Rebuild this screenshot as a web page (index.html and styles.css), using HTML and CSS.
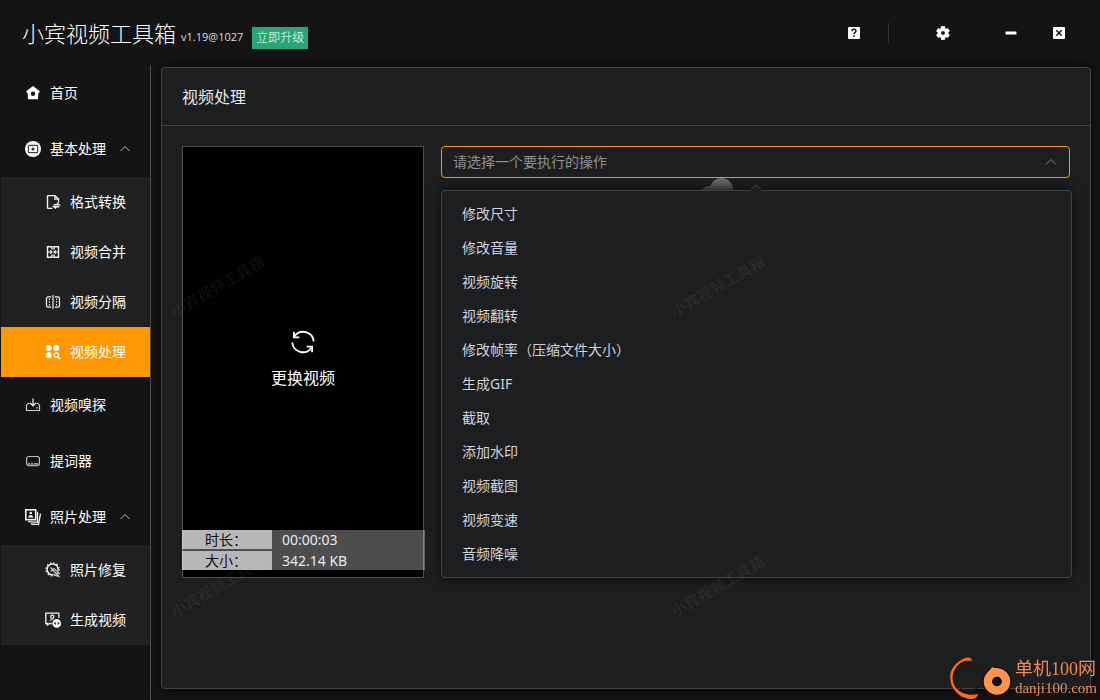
FILE: index.html
```html
<!DOCTYPE html>
<html lang="zh-CN">
<head>
<meta charset="utf-8">
<meta name="viewport" content="width=device-width, initial-scale=1">
<title>小宾视频工具箱</title>
<link rel="stylesheet" href="styles.css">
</head>
<body>
<header class="topbar">
  <h1 class="brand">小宾视频工具箱</h1>
  <span class="version">v1.19@1027</span>
  <button class="upgrade" type="button">立即升级</button>
  <div class="tools">
    <button class="tool" type="button" aria-label="帮助">
      <svg viewBox="0 0 16 16" width="16" height="16"><rect x="2" y="2" width="12" height="12" rx="1" fill="#fff"/><path d="M6 6.200C6 4.900 6.900 4.300 8 4.300S10 5 10 6.100C10 7.400 8 7.500 8 9.200" fill="none" stroke="#141414" stroke-width="1.400"/><rect x="7.200" y="10.200" width="1.600" height="1.600" fill="#141414"/></svg>
    </button>
    <span class="divider"></span>
    <button class="tool tool-settings" type="button" aria-label="设置">
      <svg viewBox="1.500 1.500 21 21" width="14" height="14"><path fill="#fff" stroke="#fff" stroke-linejoin="round" d="M19.400 13a7.500 7.500 0 0 0 0-2l2.300-1.700-2.400-4.100-2.700 1.100a7.500 7.500 0 0 0-1.700-1L14.400 2H9.600l-.5 3.300a7.500 7.500 0 0 0-1.700 1L4.700 5.200 2.300 9.300 4.600 11a7.500 7.500 0 0 0 0 2l-2.300 1.700 2.400 4.100 2.700-1.100a7.500 7.500 0 0 0 1.700 1l.5 3.300h4.800l.5-3.300a7.500 7.500 0 0 0 1.700-1l2.700 1.100 2.400-4.100zM12 15.400a3.400 3.400 0 1 1 0-6.800 3.400 3.400 0 0 1 0 6.800z"/></svg>
    </button>
    <button class="tool" type="button" aria-label="最小化">
      <svg viewBox="0 0 16 16" width="16" height="16"><rect x="2.500" y="6.500" width="11" height="3" rx=".5" fill="#fff"/></svg>
    </button>
    <button class="tool" type="button" aria-label="关闭">
      <svg viewBox="0 0 16 16" width="16" height="16"><rect x="2" y="2" width="12" height="12" rx="1" fill="#fff"/><path d="M5.300 5.300l5.400 5.400M10.700 5.300l-5.400 5.400" stroke="#141414" stroke-width="1.500"/></svg>
    </button>
  </div>
</header>

<div class="shell">
  <nav class="sidebar">
    <a class="item" href="#home">
      <svg class="icon" viewBox="0 0 16 16"><path fill="#fff" fill-rule="evenodd" d="M8 1L14.800 6.200 14 8.100H13.400L13 14.300H3L2.600 8.100H2L1.200 6.200zM8 6.600A2.200 2.200 0 1 0 8 11 2.200 2.200 0 0 0 8 6.600z"/></svg>
      首页
    </a>
    <a class="item" href="#basic" aria-expanded="true">
      <svg class="icon" viewBox="0 0 16 16"><circle cx="8" cy="8" r="8" fill="#fff"/><rect x="3.400" y="4.400" width="9.200" height="7.200" rx=".6" fill="none" stroke="#444" stroke-width="1.200"/><circle cx="8" cy="8" r="1.600" fill="#333"/></svg>
      基本处理
      <svg class="caret" viewBox="0 0 12 12"><path d="M1.500 8L6 3.500 10.500 8"/></svg>
    </a>
    <div class="group">
      <a class="item sub" href="#convert">
        <svg class="icon line" viewBox="0 0 16 16"><path d="M7.500 14.400H3.200Q2.500 14.400 2.500 13.700V2.300Q2.500 1.600 3.200 1.600H10l3.500 3.500v3.400M9.900 1.800v3.300h3.400" stroke-width="1.400"/><path d="M8.500 10.800H14L12 9M14.300 12.700H9l2 1.800" stroke-width="1.600"/></svg>
        格式转换
      </a>
      <a class="item sub" href="#merge">
        <svg class="icon line" viewBox="0 0 16 16"><path d="M7 5.500V2.800H2.500v10.400H7v-2.700M9 5.500V2.800h4.500v10.400H9v-2.700" stroke-width="1.400"/><path d="M3 8h3.500M13 8H9.500M5.300 6.300L7 8 5.300 9.700M10.700 6.300L9 8l1.700 1.700"/></svg>
        视频合并
      </a>
      <a class="item sub" href="#split">
        <svg class="icon line" viewBox="0 0 16 16"><path d="M6.200 2.900H3.200Q1.500 2.900 1.500 4.600v6.800Q1.500 13.100 3.200 13.100h3M9.800 2.900h3q1.700 0 1.700 1.700v6.800q0 1.700-1.700 1.700h-3"/><path d="M4.400 4.400v1.600M4.400 7.200v1.600M4.400 10v1.600M11.600 4.400v1.600M11.600 7.200v1.600M11.600 10v1.600" stroke-width="1"/><path d="M8 1v14" stroke="#999" stroke-width="2"/></svg>
        视频分隔
      </a>
      <a class="item sub active" href="#process" aria-current="page">
        <svg class="icon" viewBox="0 0 16 16"><g fill="#fff"><circle cx="3.800" cy="4" r="2.900"/><circle cx="11.200" cy="4" r="2.900"/><circle cx="3.800" cy="11.200" r="2.900"/></g><circle cx="11.300" cy="11" r="2.200" fill="none" stroke="#fff" stroke-width="1.300"/><path d="M12.800 12.700l2.200 2.300" stroke="#fff" stroke-width="1.400"/></svg>
        视频处理
      </a>
    </div>
    <a class="item" href="#sniff">
      <svg class="icon line" viewBox="0 0 16 16"><path d="M8 1.500V8.500M5.200 6L8 8.800 10.800 6"/><path d="M4.500 6.500H3L1.500 8.500V13.500h13V8.500L13 6.500h-1.500M11.300 10.800h1.500" stroke="#ccc"/></svg>
      视频嗅探
    </a>
    <a class="item" href="#prompter">
      <svg class="icon line" viewBox="0 0 16 16"><rect x="1.600" y="3.500" width="12.800" height="9.200" rx="2.200" stroke="#bbb"/><path d="M3 10.600h2M6 10.600h2M9 10.600h4M2.500 12h11" stroke="#999"/></svg>
      提词器
    </a>
    <a class="item" href="#photo" aria-expanded="true">
      <svg class="icon line" viewBox="0 0 16 16"><rect x=".8" y=".8" width="9.900" height="9.900" stroke-width="1.600"/><circle cx="5.700" cy="4" r="1.300" fill="#fff" stroke="none"/><path d="M3 8.500Q3.500 6 5.700 6T8.400 8.500z" fill="#fff" stroke="none"/><path d="M3.200 12.600l9.300.8V2.800M6 15l7.500.6 2-11" stroke-width="1.300"/></svg>
      照片处理
      <svg class="caret" viewBox="0 0 12 12"><path d="M1.500 8L6 3.500 10.500 8"/></svg>
    </a>
    <div class="group">
      <a class="item sub" href="#restore">
        <svg class="icon line" viewBox="0 0 16 16"><path d="M13 8.500A5.500 5.500 0 1 0 8 12.900" stroke-width="1.500"/><circle cx="7.500" cy="7.300" r="6.500" stroke-dasharray="1.500 1.900" stroke-width="1.400"/><path d="M5.500 5.500l9 9.500M6 9.500l3-3 6 5.500M8 12l5 2.500" stroke="#ccc" stroke-width="1.200"/></svg>
        照片修复
      </a>
      <a class="item sub" href="#generate">
        <svg class="icon line" viewBox="0 0 16 16"><path d="M6.800 11.500H4.500L2.500 13V11.500H.8V1.200h13V6" stroke-width="1.300"/><circle cx="7.300" cy="4.800" r="1.600"/><path d="M4.600 8.800Q5.500 7.500 7.500 7.600" stroke-width="1"/><circle cx="11.700" cy="11.400" r="4.300" fill="#fff" stroke="none"/><path d="M8.800 11.400L10.700 9.800V13zM14.600 11.400L12.700 9.800V13z" fill="#222" stroke="none"/></svg>
        生成视频
      </a>
    </div>
  </nav>

  <main class="main">
    <section class="panel">
      <h2 class="panel-title">视频处理</h2>
      <div class="panel-body">
        <div class="preview">
          <button class="replace" type="button">
            <svg viewBox="0 0 24 24" width="24" height="24" fill="none" stroke="#fff" stroke-width="1.800"><path d="M3.500 6.300A10.600 10.600 0 0 1 22.700 11.500M20.500 17.700A10.600 10.600 0 0 1 1.300 12.500"/><path d="M2.900 1.700V7.300H8.300M21.100 22.300V16.700H15.700"/></svg>
            更换视频
          </button>
          <dl class="meta">
            <dt>时长：</dt><dd>00:00:03</dd>
            <dt>大小：</dt><dd>342.14 KB</dd>
          </dl>
        </div>
        <div class="operation">
          <div class="picker">
            <select class="select" aria-label="操作">
              <option>请选择一个要执行的操作</option>
              <option>修改尺寸</option>
              <option>修改音量</option>
              <option>视频旋转</option>
              <option>视频翻转</option>
            </select>
            <svg class="caret picker-caret" viewBox="0 0 12 12"><path d="M1 8.500L6 3.500 11 8.500"/></svg>
          </div>
          <svg class="cloud" viewBox="0 0 34 12" aria-hidden="true"><defs><linearGradient id="haze" x1="0" y1="0" x2="0" y2="1"><stop offset="0" stop-color="#707173"/><stop offset="1" stop-color="#48494b"/></linearGradient></defs><path d="M1 12C3 9 6 7.600 9.500 8.200 11 3 15.500 0 20.500 0 27 0 32 5 32.500 12z" fill="url(#haze)"/></svg>
          <div class="menu">
            <svg class="menu-arrow" viewBox="0 0 12 7" aria-hidden="true"><path d="M0 6.500L6 .8l6 5.700V7H0z" fill="#1d1e1f"/><path d="M.5 6L6 .8 11.500 6" fill="none" stroke="#414243"/></svg>
            <ul class="options" role="listbox" aria-label="操作列表">
              <li role="option">修改尺寸</li>
              <li role="option">修改音量</li>
              <li role="option">视频旋转</li>
              <li role="option">视频翻转</li>
              <li role="option">修改帧率（压缩文件大小）</li>
              <li role="option">生成GIF</li>
              <li role="option">截取</li>
              <li role="option">添加水印</li>
              <li role="option">视频截图</li>
              <li role="option">视频变速</li>
              <li role="option">音频降噪</li>
            </ul>
          </div>
        </div>
      </div>
      <div class="marks" aria-hidden="true">
        <span>小宾视频工具箱</span><span>小宾视频工具箱</span>
        <span>小宾视频工具箱</span><span>小宾视频工具箱</span>
      </div>
    </section>
  </main>
</div>

<div class="site">
  <svg class="site-logo" viewBox="0 0 64 44" aria-hidden="true">
    <circle cx="18.500" cy="21.500" r="13.500" fill="none" stroke="#221a18" stroke-width="1.500"/>
    <path d="M18.500 17v9M14 21.500h9" stroke="#251b19" stroke-width="2"/>
    <path d="M22 5C21.500 1 17.500 1 14 2.500 6 6-.2 13 .2 22 .6 33 9 41.500 19 43 24 43.600 27.500 41.500 28 38 17 40.500 3.500 36 2.600 23 2.200 14 8.500 6.500 15 5 18 4.500 20 4.500 22 5z" fill="#ff6a0c"/>
    <circle cx="47" cy="25.500" r="14.500" fill="#111"/>
    <circle cx="47" cy="25.500" r="9" fill="none" stroke="#ff924f" stroke-width="8.500"/>
    <circle cx="47" cy="25.500" r="4.700" fill="#111"/>
    <path d="M38 16.500l4-5.300 7 1.500z" fill="#ff924f"/>
  </svg>
  <div class="site-text">
    <span class="site-name">单机100网</span>
    <span class="site-url">danji100.com</span>
  </div>
</div>
</body>
</html>
```

FILE: styles.css
```css
* {
  box-sizing: border-box;
}

body {
  margin: 0;
  min-height: 100vh;
  display: flex;
  flex-direction: column;
  background: #141414;
  color: #fff;
  font: 14px/20px "Noto Sans", "Noto Sans CJK SC", sans-serif;
}

button {
  padding: 0;
  border: 0;
  background: none;
  color: inherit;
  font: inherit;
  cursor: pointer;
}

.topbar {
  display: flex;
  align-items: center;
  height: 65px;
  padding: 0 29px 0 22px;
}

.brand {
  margin: 0;
  font-size: 22px;
  font-weight: 300;
  line-height: 30px;
  color: #fff;
}

.version {
  margin-left: 5px;
  padding-top: 9px;
  font-family: "Open Sans", sans-serif;
  font-size: 11px;
  color: #ddd;
}

.upgrade {
  margin: 11px 0 0 9px;
  padding: 0 4px;
  height: 22px;
  background: #27a776;
  font-size: 12px;
  font-weight: 300;
  line-height: 22px;
}

.tools {
  display: flex;
  align-items: center;
  margin-left: auto;
  gap: 22px;
}

.tool {
  display: grid;
  place-items: center;
  width: 24px;
  height: 24px;
}

.tool + .tool {
  margin-left: 2px;
}

.tool-settings {
  margin: 0 20px;
}

.divider {
  width: 1px;
  height: 20px;
  background: #333;
}

.shell {
  flex: 1;
  display: flex;
}

.sidebar {
  flex: none;
  width: 151px;
  padding-left: 1px;
  border-right: 1px solid #4c4d4f;
}

.item {
  display: flex;
  align-items: center;
  height: 56px;
  padding-left: 24px;
  color: #fff;
  text-decoration: none;
}

.icon {
  width: 16px;
  height: 16px;
  margin-right: 9px;
}

.line {
  fill: none;
  stroke: #f2f2f2;
  stroke-width: 1.2;
}

.caret {
  width: 12px;
  height: 12px;
  margin-left: 13px;
  fill: none;
  stroke: #bbb;
}

.group {
  background: #212121;
}

.sub {
  height: 50px;
  padding-left: 44px;
}

.active {
  background: #ff9800;
}

.main {
  flex: 1;
  display: flex;
  min-width: 0;
  padding: 2px 9px 11px 10px;
}

.panel {
  position: relative;
  flex: 1;
  min-width: 0;
  overflow: hidden;
  border: 1px solid #414243;
  border-radius: 4px;
  background: #1d1e1f;
  box-shadow: 0 0 12px rgba(0, 0, 0, 0.7);
}

.panel-title {
  margin: 0;
  padding: 18px 20px 17px;
  border-bottom: 1px solid #414243;
  color: #e5eaf3;
  font-size: 16px;
  font-weight: 400;
  line-height: 22px;
}

.panel-body {
  display: flex;
  align-items: flex-start;
  gap: 17px;
  padding: 20px;
}

.preview {
  position: relative;
  flex: none;
  display: flex;
  align-items: center;
  justify-content: center;
  width: 242px;
  min-height: 432px;
  padding-bottom: 6px;
  border: 1px solid #4c4d4f;
  background: #000;
}

.replace {
  display: flex;
  flex-direction: column;
  align-items: center;
  gap: 13px;
  font-size: 16px;
  line-height: 22px;
}

.meta {
  position: absolute;
  left: -1px;
  right: -2px;
  bottom: 7px;
  display: grid;
  grid-template-columns: 90px 1fr;
  row-gap: 2px;
  margin: 0;
  background: rgba(255, 255, 255, 0.3);
  line-height: 19px;
}

.meta dt {
  padding-left: 23px;
  background: rgba(255, 255, 255, 0.6);
  color: #111;
}

.meta dd {
  margin: 0;
  padding-left: 10px;
  color: #e5eaf3;
}

.operation {
  position: relative;
  flex: 1;
  min-width: 0;
}

.picker {
  display: grid;
  align-items: center;
}

.picker > * {
  grid-area: 1 / 1;
}

.select {
  width: 100%;
  height: 32px;
  padding: 0 11px;
  border: 1px solid #ff9800;
  border-radius: 4px;
  background: #1d1e1f;
  color: #8d9095;
  font: inherit;
  appearance: none;
  outline: none;
}

.picker-caret {
  justify-self: end;
  margin-right: 13px;
  stroke: #7c7e82;
  pointer-events: none;
}

.cloud {
  position: absolute;
  top: 32px;
  left: 260px;
  width: 34px;
  height: 12px;
}

.menu {
  position: relative;
  margin: 12px -2px 0 0;
  padding: 6px 0;
  border: 1px solid #414243;
  border-radius: 4px;
  background: #1d1e1f;
  box-shadow: 0 0 12px rgba(0, 0, 0, 0.7);
}

.menu-arrow {
  position: absolute;
  top: -7px;
  left: calc(50% - 7px);
  width: 12px;
  height: 7px;
}

.options {
  margin: 0;
  padding: 0;
  list-style: none;
  color: #cfd3dc;
  line-height: 34px;
}

.options li {
  padding: 0 20px;
}

.marks {
  position: absolute;
  top: 68px;
  left: -194px;
  display: grid;
  grid-template-columns: 500px 500px;
  grid-auto-rows: 300px;
  place-items: center;
  pointer-events: none;
  color: rgba(255, 255, 255, 0.07);
  font-size: 15px;
  font-weight: 500;
}

.marks span {
  transform: rotate(-30deg);
}

.site {
  position: fixed;
  right: 3px;
  bottom: 0;
  display: flex;
  align-items: center;
}

.site-logo {
  width: 64px;
  height: 44px;
  margin-right: 1px;
}

.site-text {
  display: flex;
  flex-direction: column;
  color: #f28a4e;
  font-family: "Liberation Serif", "Noto Sans CJK SC", serif;
}

.site-name {
  font-size: 18px;
  line-height: 20px;
}

.site-url {
  font-size: 15px;
  line-height: 18px;
}
```
